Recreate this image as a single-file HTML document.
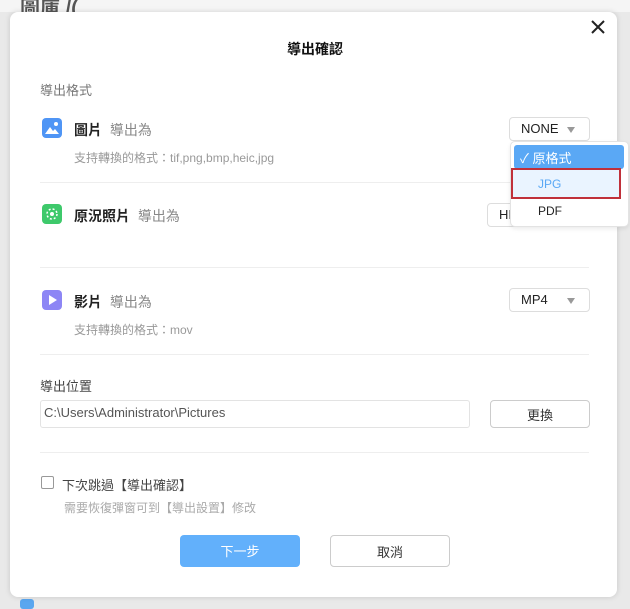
<!DOCTYPE html>
<html><head><meta charset="utf-8"><style>
*{margin:0;padding:0;box-sizing:border-box}
body{width:630px;height:607px;background:#e9e9e9;font-family:"Liberation Sans","Noto Sans CJK TC",sans-serif;position:relative;overflow:hidden;font-size:13px;color:#333}
.a{position:absolute}
.dlg{left:10px;top:12px;width:607px;height:585px;background:#fff;border-radius:8px;box-shadow:0 0 6px rgba(0,0,0,.15)}
.hr{height:1px;background:#eee;left:40px;width:549px}
.sel{border:1px solid #ddd;border-radius:4px;background:#fff;height:24px;font-size:13px;color:#222;padding:3px 0 0 11px}
.tri{position:absolute;right:14px;top:9px;border-left:4px solid transparent;border-right:4px solid transparent;border-top:6px solid #999}
.g{color:#999;font-size:12px}
.t{font-size:14px;font-weight:bold;color:#222}
.ic{width:20px;height:20px;border-radius:4px}
</style></head><body>
<div class="a" style="left:0;top:0;width:630px;height:12px;background:#f5f5f5"></div>
<div class="a" style="left:20px;top:-8px;font-size:20px;font-weight:bold;color:#555">圖庫 /(</div>
<div class="a" style="left:20px;top:599px;width:14px;height:10px;background:#5aa6ef;border-radius:3px"></div>
<div class="dlg a"></div>
<svg class="a" style="left:590px;top:19px" width="16" height="16"><path d="M2 2 L14 14 M14 2 L2 14" stroke="#222" stroke-width="2"/></svg>
<div class="a" style="left:0;width:630px;top:39px;text-align:center;font-size:14px;font-weight:bold;color:#111">導出確認</div>
<div class="a" style="left:40px;top:80px;color:#777">導出格式</div>

<div class="a ic" style="left:42px;top:118px;background:#4f95f5"><svg width="20" height="20"><circle cx="14" cy="6" r="2" fill="#fff"/><path d="M3 16 L8 9 L11 13 L13 11 L17 16Z" fill="#fff"/></svg></div>
<div class="a t" style="left:74px;top:120px">圖片 <span style="font-weight:normal;color:#888;margin-left:4px">導出為</span></div>
<div class="a sel" style="left:509px;top:117px;width:81px">NONE<div class="tri"></div></div>
<div class="a g" style="left:74px;top:149px">支持轉換的格式：tif,png,bmp,heic,jpg</div>
<div class="a hr" style="top:182px"></div>

<div class="a ic" style="left:42px;top:204px;background:#3ec96b"><svg width="20" height="20"><circle cx="10" cy="10" r="5" fill="none" stroke="#fff" stroke-width="1.5" stroke-dasharray="2 2"/><circle cx="10" cy="10" r="2" fill="#fff"/></svg></div>
<div class="a t" style="left:74px;top:206px">原況照片 <span style="font-weight:normal;color:#888;margin-left:4px">導出為</span></div>
<div class="a sel" style="left:487px;top:203px;width:60px">HI</div>
<div class="a hr" style="top:267px"></div>

<div class="a ic" style="left:42px;top:290px;background:#8d86f5"><svg width="20" height="20"><path d="M7 5 L15 10 L7 15Z" fill="#fff"/></svg></div>
<div class="a t" style="left:74px;top:292px">影片 <span style="font-weight:normal;color:#888;margin-left:4px">導出為</span></div>
<div class="a sel" style="left:509px;top:288px;width:81px">MP4<div class="tri"></div></div>
<div class="a g" style="left:74px;top:321px">支持轉換的格式：mov</div>
<div class="a hr" style="top:354px"></div>

<div class="a" style="left:40px;top:376px;color:#444">導出位置</div>
<div class="a" style="left:40px;top:400px;width:430px;height:28px;border:1px solid #e3e3e3;border-radius:3px;padding:4px 3px;color:#555;font-size:13px">C:\Users\Administrator\Pictures</div>
<div class="a" style="left:490px;top:400px;width:100px;height:28px;border:1px solid #ccc;border-radius:4px;text-align:center;padding-top:4px;color:#333">更換</div>
<div class="a hr" style="top:452px"></div>

<div class="a" style="left:41px;top:476px;width:13px;height:13px;border:1px solid #999;border-radius:2px"></div>
<div class="a" style="left:62px;top:475px;color:#444">下次跳過【導出確認】</div>
<div class="a g" style="left:64px;top:499px;color:#aaa">需要恢復彈窗可到【導出設置】修改</div>

<div class="a" style="left:180px;top:535px;width:120px;height:32px;background:#62b0fb;border-radius:4px;color:#fff;text-align:center;padding-top:6px">下一步</div>
<div class="a" style="left:330px;top:535px;width:120px;height:32px;border:1px solid #ccc;border-radius:4px;color:#333;text-align:center;padding-top:6px">取消</div>

<div class="a" style="left:510px;top:141px;width:119px;height:86px;background:#fff;border:1px solid #e3e3e3;border-radius:5px;box-shadow:0 2px 4px rgba(0,0,0,.08)"></div>
<div class="a" style="left:514px;top:145px;width:110px;height:24px;background:#5aa8f5;border-radius:3px;color:#fff;padding:3px 0 0 6px">✓ 原格式</div>
<div class="a" style="left:511px;top:168px;width:110px;height:31px;background:#eaf4ff;border:2px solid #c0303a;color:#5aa8f5;padding:7px 0 0 25px;font-size:12px">JPG</div>
<div class="a" style="left:538px;top:204px;font-size:12px;color:#222">PDF</div>
</body></html>
